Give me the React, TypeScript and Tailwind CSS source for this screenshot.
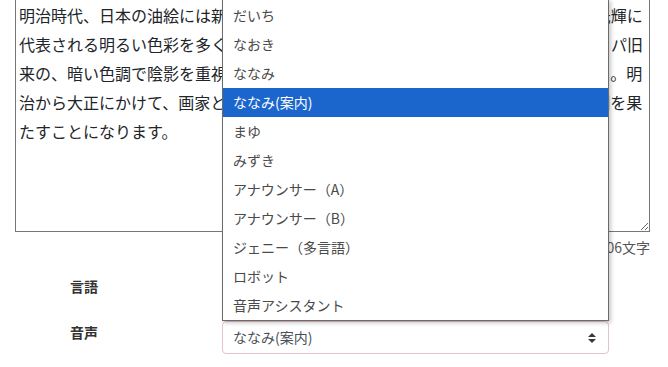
import React from 'react';

const BODY =
  '明治時代、日本の油絵には新たな流れが生まれました。それはフランス印象派の光輝に' +
  '代表される明るい色彩を多く取り入れた作品が次々と登場し、それまでのヨーロッパ旧' +
  '来の、暗い色調で陰影を重視する古い技法とは大きく異なる表現が急速に広まった。明' +
  '治から大正にかけて、画家と批評家が互いに刺激し合いながら、極めて重要な役割を果' +
  'たすことになります。';

const VOICES = [
  'だいち',
  'なおき',
  'ななみ',
  'ななみ(案内)',
  'まゆ',
  'みずき',
  'アナウンサー（A）',
  'アナウンサー（B）',
  'ジェニー（多言語）',
  'ロボット',
  '音声アシスタント',
];

const SELECTED = 'ななみ(案内)';

function UpDown() {
  return (
    <svg width="8" height="10" viewBox="0 0 4 5" className="shrink-0">
      <path d="M2 0L0 2h4zm0 5L0 3h4z" fill="#343a40" />
    </svg>
  );
}

function SelectBox({ value }: { value: string }) {
  return (
    <div className="flex h-[33px] w-[387px] items-center justify-between rounded-[4px] border border-[#e6c3c7] bg-white pl-[10px] pr-[12px] text-[14px] text-[#495057]">
      <span>{value}</span>
      <UpDown />
    </div>
  );
}

export default function App() {
  return (
    <div
      className="relative h-[367px] w-[668px] overflow-hidden bg-white"
      style={{ fontFamily: '"Noto Sans CJK JP", "Noto Sans", sans-serif' }}
    >
      <div className="-mt-px pl-[15px] pr-[18px]">
        <textarea
          readOnly
          defaultValue={BODY}
          className="block h-[233px] w-full resize-y border border-[#767676] bg-white px-[3px] pt-[1px] text-[16px] leading-[29px] text-[#212529] outline-none"
          style={{ fontFamily: '"Noto Sans CJK JP", sans-serif' }}
        />
        <div className="mt-[5px] text-right text-[14px] leading-[21px] text-[#555]">406文字</div>

        <div className="mt-[17px] flex flex-col gap-[13px]">
          <div className="flex items-center">
            <div className="w-[207px] pl-[55px] pb-[11px] text-[14px] font-bold text-[#333]">言語</div>
            <SelectBox value="日本語" />
          </div>
          <div className="flex items-center">
            <div className="w-[207px] pl-[55px] pb-[11px] text-[14px] font-bold text-[#333]">音声</div>
            <SelectBox value={SELECTED} />
          </div>
        </div>
      </div>

      {/* open option list of the voice select */}
      <div className="absolute left-[222px] top-[-1px] w-[387px] border border-[#6b6b6b] bg-white pt-[1px] shadow-[2px_2px_4px_rgba(0,0,0,0.22)]">
        {VOICES.map((v) => (
          <div
            key={v}
            className={
              v === SELECTED
                ? 'flex h-[29px] items-center bg-[#1b66cc] pl-[10px] text-[14px] text-white'
                : 'flex h-[29px] items-center pl-[10px] text-[14px] text-[#4a4a4a]'
            }
          >
            {v}
          </div>
        ))}
      </div>
    </div>
  );
}
